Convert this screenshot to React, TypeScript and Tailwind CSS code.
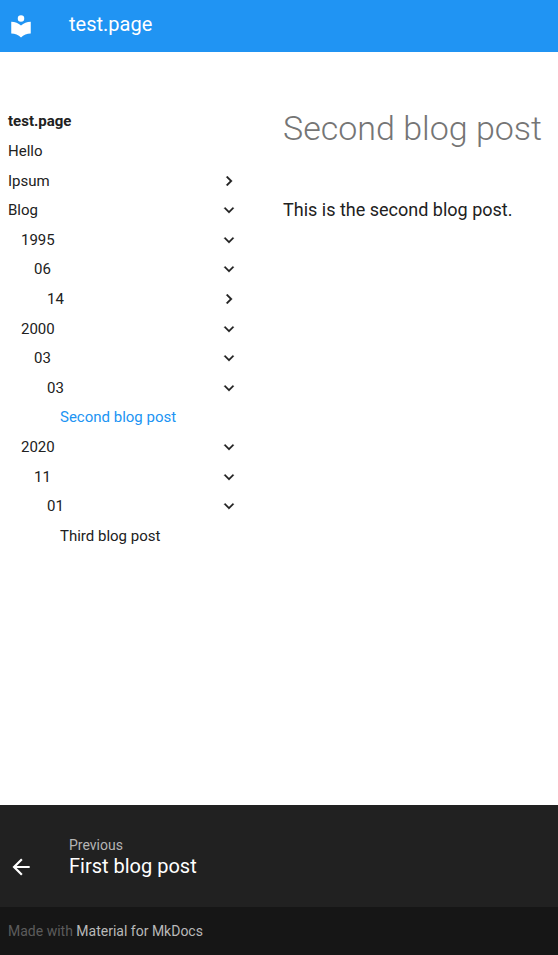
type Item = { label: string; level: number; arrow?: 'right' | 'down'; active?: boolean };

const items: Item[] = [
  { label: 'Hello', level: 0 },
  { label: 'Ipsum', level: 0, arrow: 'right' },
  { label: 'Blog', level: 0, arrow: 'down' },
  { label: '1995', level: 1, arrow: 'down' },
  { label: '06', level: 2, arrow: 'down' },
  { label: '14', level: 3, arrow: 'right' },
  { label: '2000', level: 1, arrow: 'down' },
  { label: '03', level: 2, arrow: 'down' },
  { label: '03', level: 3, arrow: 'down' },
  { label: 'Second blog post', level: 4, active: true },
  { label: '2020', level: 1, arrow: 'down' },
  { label: '11', level: 2, arrow: 'down' },
  { label: '01', level: 3, arrow: 'down' },
  { label: 'Third blog post', level: 4 },
];

const indents = ['pl-0', 'pl-[13px]', 'pl-[26px]', 'pl-[39px]', 'pl-[52px]'];

function Chevron({ down }: { down: boolean }) {
  return (
    <svg
      viewBox="0 0 24 24"
      className={`size-5 fill-current stroke-current ${down ? 'rotate-90' : ''}`}
      strokeWidth="0.3"
      aria-hidden="true"
    >
      <path d="M8.59 16.58 13.17 12 8.59 7.41 10 6l6 6-6 6-1.41-1.42Z" />
    </svg>
  );
}

function NavItem({ item }: { item: Item }) {
  const layout = `flex h-5 w-full items-center justify-between text-left ${indents[item.level]}`;
  return (
    <li>
      {item.arrow ? (
        <button type="button" aria-expanded={item.arrow === 'down'} className={layout}>
          {item.label}
          <Chevron down={item.arrow === 'down'} />
        </button>
      ) : (
        <a href="#" className={`${layout} ${item.active ? 'text-[#2094f3]' : ''}`}>
          {item.label}
        </a>
      )}
    </li>
  );
}

export default function App() {
  return (
    <div className="flex min-h-screen flex-col bg-white font-[Roboto,sans-serif] text-[#212121]">
      <header className="flex h-[52px] items-center bg-[#2094f3] px-2 text-white">
        <a href="#" aria-label="test.page" className="w-[61px]">
          <svg viewBox="0 0 24 24" className="size-[26px] fill-current" aria-hidden="true">
            <path d="M12 8a3 3 0 0 0 3-3 3 3 0 0 0-3-3 3 3 0 0 0-3 3 3 3 0 0 0 3 3m0 3.54C9.64 9.35 6.5 8 3 8v11c3.5 0 6.64 1.35 9 3.54 2.36-2.19 5.5-3.54 9-3.54V8c-3.5 0-6.64 1.35-9 3.54Z" />
          </svg>
        </a>
        <span className="pb-1 text-xl">test.page</span>
      </header>
      <main className="flex grow">
        <nav aria-label="Navigation" className="w-[266px] shrink-0 pt-[59px] pr-[27px] pl-2 text-[15px] leading-5">
          <a href="#" className="block font-bold">test.page</a>
          <ul className="mt-[10px] grid min-h-[405px] content-between">
            {items.map((item, index) => (
              <NavItem key={index} item={item} />
            ))}
          </ul>
        </nav>
        <article className="min-w-0 grow pt-[54px] pl-[17px]">
          <h1 className="text-[34px] leading-[45px] font-light whitespace-nowrap text-[#757575]">Second blog post</h1>
          <p className="mt-[45px] text-[18px] leading-7">This is the second blog post.</p>
        </article>
      </main>
      <footer className="text-white">
        <nav aria-label="Footer" className="h-[102px] bg-[#212121] px-2 pt-[31px]">
          <a href="#" className="flex items-end">
            <span className="w-[61px]">
              <svg viewBox="0 0 24 24" className="block size-[26px] fill-current" aria-hidden="true">
                <path d="M20 11v2H8l5.5 5.5-1.42 1.42L4.16 12l7.92-7.92L13.5 5.5 8 11h12Z" />
              </svg>
            </span>
            <span className="pb-0.5">
              <span className="block text-sm leading-[18px] text-[#b5b5b5]">Previous</span>
              <span className="block text-xl leading-6">First blog post</span>
            </span>
          </a>
        </nav>
        <p className="h-12 bg-[#161616] px-2 text-sm leading-[48px] text-[#5c5c5c]">
          Made with <a href="#" className="text-[#b9b9b9]">Material for MkDocs</a>
        </p>
      </footer>
    </div>
  );
}
